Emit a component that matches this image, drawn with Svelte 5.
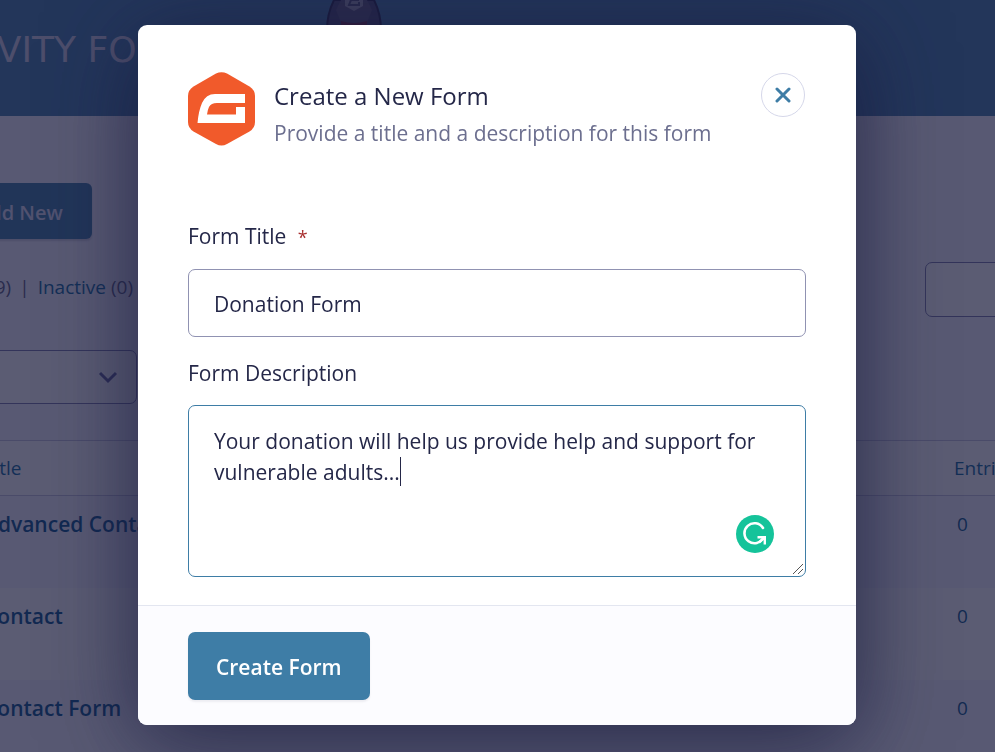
<script lang="ts">
  let title = $state("Donation Form");
  let description = $state(
    "Your donation will help us provide help and support for vulnerable adults..."
  );
  let search = $state("");

  const forms = [
    { title: "Advanced Contact Form", entries: 0 },
    { title: "Contact", entries: 0 },
    { title: "Contact Form", entries: 0 },
  ];
</script>

<div class="page" inert>
  <header class="banner">
    <span class="brand">GRAVITY FORMS</span>
    <svg class="rocket" width="56" height="60" viewBox="0 0 56 60">
      <path d="M8 0 C3 10 1 18 1 30 V60 H55 V30 C55 18 53 10 48 0 Z" fill="#4a4a74" stroke="#25264c" stroke-width="2" />
      <path d="M15 0 L10 10 L18 30 H38 L46 10 L41 0 Z" fill="#5c5a7e" />
      <path d="M15 21 Q28 25 41 21 V34 H15 Z" fill="#782a48" />
      <path d="M19 0 H37 V6 L28 11 L19 6 Z" fill="#9c9cb4" />
      <path d="M33 0 H25 L23 5 H33 V2" fill="none" stroke="#525278" stroke-width="2" />
    </svg>
  </header>

  <main class="content">
    <button class="add_new">Add New</button>
    <div class="toolbar">
      <nav>
        <span><a href="#active">Active</a> (9)</span>
        <span>|</span>
        <span><a href="#inactive">Inactive</a> (0)</span>
      </nav>
      <input type="search" aria-label="Search forms" bind:value={search} />
    </div>
    <div class="select_wrap">
      <select aria-label="Bulk actions"><option></option></select>
      <svg width="22" height="14" viewBox="0 0 22 14">
        <path d="M3 3 L11 11 L19 3" fill="none" stroke="#62629a" stroke-width="3" />
      </svg>
    </div>
  </main>

  <table>
    <thead>
      <tr><th>Title</th><th class="entries">Entries</th></tr>
    </thead>
    <tbody>
      {#each forms as form}
        <tr>
          <td><a href="#form">{form.title}</a></td>
          <td class="entries">{form.entries}</td>
        </tr>
      {/each}
    </tbody>
  </table>
</div>

<div class="overlay">
  <div class="modal" role="dialog" aria-modal="true" aria-labelledby="modal_title">
    <div class="modal_head">
      <svg class="logo" width="67" height="74" viewBox="0 0 67 74">
        <path
          d="M28 1.500 Q33.500 -1 39 1.500 L61.500 14.500 Q67 18 67 24 V50 Q67 56 61.500 59.500 L39 72 Q33.500 75 28 72 L5.500 59.500 Q0 56 0 50 V24 Q0 18 5.500 14.500 Z"
          fill="#f15a2b"
        />
        <path
          d="M57 22 V31 H29 Q23 31 21 35 Q19.500 38 19 42.500 H48 V35 H57 V51 H9.500 Q10.500 39 14 31 Q18 22 27 22 Z"
          fill="#fff"
        />
      </svg>
      <div class="heading">
        <h1 id="modal_title">Create a New Form</h1>
        <p>Provide a title and a description for this form</p>
      </div>
      <button class="close" aria-label="Close">
        <svg width="16" height="16" viewBox="0 0 16 16">
          <path d="M2 2 L14 14 M14 2 L2 14" stroke="#3e7da6" stroke-width="3" stroke-linecap="round" />
        </svg>
      </button>
    </div>

    <form id="new_form" class="fields">
      <label for="form_title">Form Title <span class="required">*</span></label>
      <input id="form_title" type="text" bind:value={title} />
      <label for="form_description">Form Description</label>
      <div class="area">
        <textarea id="form_description" spellcheck="false" bind:value={description}></textarea>
        <span class="caret"></span>
        <svg class="grammar" width="38" height="38" viewBox="0 0 38 38">
          <circle cx="19" cy="19" r="19" fill="#15c39a" />
          <path d="M27 13 A10 10 0 1 0 27.500 22.500" fill="none" stroke="#fff" stroke-width="2.600" stroke-linecap="round" />
          <path d="M21.500 22.300 H28.800 V29.500" fill="none" stroke="#fff" stroke-width="2.400" />
          <path d="M28 23 L23 27.500" stroke="#fff" stroke-width="2.400" />
        </svg>
        <svg class="grip" width="12" height="12" viewBox="0 0 12 12">
          <path d="M1 11 L11 1 M6 11 L11 6" stroke="#555" stroke-width="1" />
        </svg>
      </div>
    </form>

    <div class="modal_foot">
      <button class="submit" form="new_form" type="button">Create Form</button>
    </div>
  </div>
</div>

<style>
  :global(body) {
    background: #f6f6ff;
    font-family: "Segoe UI", "Open Sans", "Noto Sans", sans-serif;
    color: #242748;
    overflow: hidden;
  }
  button, input, textarea, select {
    font: inherit;
    color: inherit;
    box-sizing: border-box;
  }
  .page {
    height: 100vh;
    overflow: hidden;
    font-size: 19px;
  }
  .banner {
    height: 116px;
    background: #447fac;
    display: flex;
    align-items: flex-start;
    justify-content: flex-start;
    gap: 111px;
  }
  .brand {
    margin-left: -77px;
    line-height: 100px;
    font-family: "DejaVu Sans", sans-serif;
    font-size: 36px;
    color: #cfcfe4;
    white-space: nowrap;
  }
  .content {
    margin-left: -53px;
    padding-top: 67px;
  }
  .add_new {
    display: block;
    height: 56px;
    padding: 3px 29px 0;
    border: none;
    border-radius: 6px;
    background: #3e7da6;
    color: #dcdcf0;
    font-size: 20px;
    font-weight: 600;
    box-shadow: 0 2px 2px rgba(58, 58, 87, 0.2);
  }
  .toolbar {
    display: flex;
    justify-content: space-between;
    align-items: center;
    margin-top: 23px;
    height: 55px;
    color: #5b5e80;
  }
  nav {
    width: 186px;
    margin-bottom: 6px;
    display: flex;
    justify-content: flex-end;
    gap: 8px;
    white-space: nowrap;
    line-height: 24px;
  }
  a {
    color: #0f6a9e;
    text-decoration: none;
  }
  .toolbar input {
    height: 55px;
    width: 300px;
    margin-right: -230px;
    border: 1px solid #7b7bab;
    border-radius: 7px;
    background: #fff;
  }
  .select_wrap {
    display: flex;
    align-items: center;
    width: 190px;
    margin-top: 33px;
  }
  .select_wrap select {
    appearance: none;
    width: 100%;
    height: 54px;
    border: 1px solid #7b7bab;
    border-radius: 7px;
    background: #fff;
  }
  .select_wrap svg {
    flex: none;
    margin-left: -40px;
  }
  table {
    width: calc(100% + 100px);
    margin-top: 36px;
    border-collapse: collapse;
    table-layout: fixed;
  }
  th {
    height: 54px;
    padding: 0;
    background: #fff;
    border-top: 1px solid #c5c5dd;
    border-bottom: 1px solid #c5c5dd;
    text-align: left;
    font-weight: 400;
    color: #0f6a9e;
  }
  th:first-child, td:first-child {
    text-indent: -16px;
  }
  td {
    height: 92px;
    box-sizing: border-box;
    padding: 16px 0 0;
    vertical-align: top;
    line-height: 24px;
    color: #0f5a8e;
  }
  td a {
    color: #0a568e;
    font-size: 21px;
    font-weight: 600;
  }
  .entries {
    width: 141px;
  }
  td.entries {
    text-indent: 3px;
  }
  tbody tr:nth-child(even) {
    background: #fff;
  }

  .overlay {
    position: fixed;
    inset: 0;
    display: flex;
    justify-content: center;
    align-items: flex-start;
    padding: 25px 21px 25px 20px;
    background: rgba(22, 23, 55, 0.7);
    font-size: 21px;
  }
  .modal {
    width: 100%;
    max-width: 718px;
    border-radius: 9px;
    background: #fff;
    overflow: hidden;
    box-shadow: 0 16px 90px rgba(24, 26, 62, 0.8);
  }
  .modal_head {
    display: flex;
    align-items: flex-start;
    padding: 47px 51px 0 50px;
  }
  .heading {
    flex: 1;
    margin-left: 19px;
  }
  h1 {
    margin: 6px 0 0;
    font-size: 24px;
    line-height: 36px;
    font-weight: 400;
  }
  p {
    margin: 0;
    line-height: 38px;
    color: #6c6f8f;
  }
  .close {
    width: 44px;
    height: 44px;
    margin-top: 1px;
    padding: 0;
    border: 1px solid #d5d7e9;
    border-radius: 50%;
    background: #fff;
    display: grid;
    place-items: center;
  }
  .fields {
    padding: 68px 50px 28px;
  }
  label {
    display: block;
    margin-bottom: 16px;
    line-height: 32px;
  }
  .required {
    margin-left: 6px;
    color: #a82f2f;
    font-size: 18px;
  }
  .fields input, textarea {
    display: block;
    width: 100%;
    border: 1px solid #9092b2;
    border-radius: 7px;
    background: #fff;
    outline: none;
  }
  .fields input {
    height: 68px;
    margin-bottom: 20px;
    padding: 2px 25px 0;
  }
  .area {
    position: relative;
  }
  textarea {
    height: 172px;
    padding: 20px 25px;
    border-color: #3e7da6;
    line-height: 31px;
    resize: none;
  }
  .caret {
    position: absolute;
    left: 212px;
    top: 52px;
    width: 1px;
    height: 29px;
    background: #242748;
  }
  .grammar {
    position: absolute;
    right: 32px;
    bottom: 24px;
  }
  .grip {
    position: absolute;
    right: 2px;
    bottom: 2px;
  }
  .modal_foot {
    padding: 26px 50px 25px;
    border-top: 1px solid #e3e6f0;
    background: #fcfcff;
  }
  .submit {
    display: block;
    height: 68px;
    padding: 2px 28px 0;
    border: none;
    border-radius: 7px;
    background: #3e7da6;
    color: #fff;
    font-weight: 600;
    box-shadow: 0 2px 2px rgba(58, 58, 87, 0.08);
  }
</style>
